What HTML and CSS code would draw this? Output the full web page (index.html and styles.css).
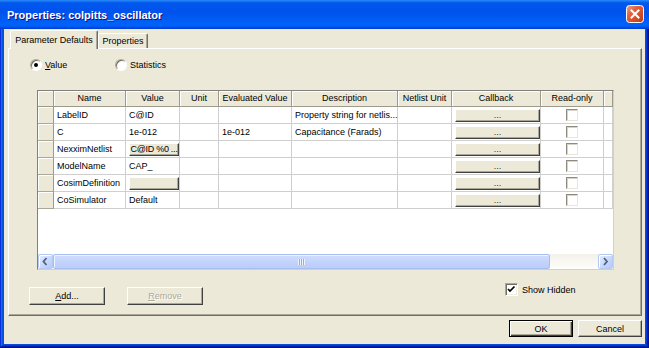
FILE: index.html
```html
<!DOCTYPE html>
<html>
<head>
<meta charset="utf-8">
<title>Properties: colpitts_oscillator</title>
<link rel="stylesheet" href="styles.css">
</head>
<body>
<div class="window">
  <div class="titlebar">
    <span class="title">Properties: colpitts_oscillator</span>
    <span class="close">
      <svg width="18" height="18" viewBox="0 0 18 18">
        <defs>
          <linearGradient id="cg" x1="0" y1="0" x2="1" y2="1">
            <stop offset="0" stop-color="#F2A68F"/>
            <stop offset=".35" stop-color="#E2623F"/>
            <stop offset="1" stop-color="#C2360F"/>
          </linearGradient>
        </defs>
        <rect x=".5" y=".5" width="17" height="17" rx="3" fill="url(#cg)" stroke="#fff"/>
        <path d="M5.5 5.5 L12.5 12.5 M12.5 5.5 L5.5 12.5" stroke="#fff" stroke-width="2" stroke-linecap="square"/>
      </svg>
    </span>
  </div>
  <div class="frame">
    <div class="tabs">
      <div class="tab active">Parameter Defaults</div>
      <div class="tab inactive">Properties</div>
    </div>
    <div class="panel">
      <div class="radios">
        <div class="radio first"><span class="rb checked"></span><span><u>V</u>alue</span></div>
        <div class="radio"><span class="rb"></span><span>Statistics</span></div>
      </div>
      <div class="grid">
        <div class="table">
          <div class="th"></div><div class="th">Name</div><div class="th">Value</div><div class="th">Unit</div><div class="th">Evaluated Value</div><div class="th">Description</div><div class="th">Netlist Unit</div><div class="th">Callback</div><div class="th">Read-only</div><div class="th"></div>

          <div class="rh"></div><div class="td">LabelID</div><div class="td">C@ID</div><div class="td"></div><div class="td"></div><div class="td">Property string for netlis...</div><div class="td"></div><div class="td btncell"><span class="cbtn">...</span></div><div class="td chk"><span class="cb"></span></div><div class="td"></div>

          <div class="rh"></div><div class="td">C</div><div class="td">1e-012</div><div class="td"></div><div class="td">1e-012</div><div class="td">Capacitance (Farads)</div><div class="td"></div><div class="td btncell"><span class="cbtn">...</span></div><div class="td chk"><span class="cb"></span></div><div class="td"></div>

          <div class="rh"></div><div class="td">NexximNetlist</div><div class="td btncell"><span class="cbtn val">C@ID %0 ...</span></div><div class="td"></div><div class="td"></div><div class="td"></div><div class="td"></div><div class="td btncell"><span class="cbtn">...</span></div><div class="td chk"><span class="cb"></span></div><div class="td"></div>

          <div class="rh"></div><div class="td">ModelName</div><div class="td">CAP_</div><div class="td"></div><div class="td"></div><div class="td"></div><div class="td"></div><div class="td btncell"><span class="cbtn">...</span></div><div class="td chk"><span class="cb"></span></div><div class="td"></div>

          <div class="rh"></div><div class="td">CosimDefinition</div><div class="td btncell"><span class="cbtn val"></span></div><div class="td"></div><div class="td"></div><div class="td"></div><div class="td"></div><div class="td btncell"><span class="cbtn">...</span></div><div class="td chk"><span class="cb"></span></div><div class="td"></div>

          <div class="rh"></div><div class="td">CoSimulator</div><div class="td">Default</div><div class="td"></div><div class="td"></div><div class="td"></div><div class="td"></div><div class="td btncell"><span class="cbtn">...</span></div><div class="td chk"><span class="cb"></span></div><div class="td"></div>
        </div>
        <div class="filler"></div>
        <div class="hscroll">
          <span class="sarrow">
            <svg width="13" height="13" viewBox="0 0 13 13"><path d="M7.5 3 L4.5 6.5 L7.5 10" fill="none" stroke="#4D6185" stroke-width="1.8"/></svg>
          </span>
          <span class="thumb"><span class="grip"></span></span>
          <span class="track"></span>
          <span class="sarrow">
            <svg width="13" height="13" viewBox="0 0 13 13"><path d="M5 3 L8 6.5 L5 10" fill="none" stroke="#4D6185" stroke-width="1.8"/></svg>
          </span>
        </div>
      </div>
      <div class="actions">
        <button class="btn"><u>A</u>dd...</button>
        <button class="btn disabled"><u>R</u>emove</button>
        <div class="showhidden">
          <span class="cb big">
            <svg width="11" height="11" viewBox="0 0 11 11"><path d="M2 5 L4 7 L8.5 2.5" fill="none" stroke="#000" stroke-width="1.7"/></svg>
          </span>
          <span>Show Hidden</span>
        </div>
      </div>
    </div>
    <div class="footer">
      <button class="btn dlg default">OK</button>
      <button class="btn dlg">Cancel</button>
    </div>
  </div>
</div>
</body>
</html>
```

FILE: styles.css
```css
* { box-sizing: border-box; }
html, body { margin: 0; padding: 0; }
body {
  width: 649px;
  height: 348px;
  overflow: hidden;
  font-family: "Liberation Sans", Arial, sans-serif;
  font-size: 9px;
  color: #000;
  background: #ECE9D8;
}

.window {
  width: 649px;
  height: 348px;
  display: flex;
  flex-direction: column;
  background: #0A4BDE;
  box-shadow: inset -1px -1px #00138c, inset 1px 1px #0831d9, inset -2px -2px #001ea0, inset 2px 2px #166aee, inset -3px -3px #003bda, inset 3px 3px #0855dd;
}

.titlebar {
  flex: none;
  height: 29px;
  display: flex;
  align-items: center;
  justify-content: space-between;
  padding: 0 5px 0 7px;
  background: linear-gradient(180deg, #2C8BFA 0, #0058EE 10%, #0052EC 40%, #0062FA 85%, #005AF0 92%, #0046D8 96%, #003DD7 100%);
}
.title {
  color: #fff;
  font-weight: bold;
  font-size: 11px;
  text-shadow: 1px 1px #0F1089;
  padding-top: 1px;
}
.close { display: block; width: 18px; height: 18px; margin-top: -2px; }
.close svg { display: block; }

.frame {
  flex: 1;
  margin: 0 4px 4px 4px;
  background: #ECE9D8;
  display: flex;
  flex-direction: column;
}

.tabs {
  display: flex;
  align-items: flex-end;
  height: 19px;
  margin: 1px 0 0 6px;
  position: relative;
  z-index: 1;
}
.tab {
  background: #ECE9D8;
  border: 1px solid;
  border-bottom: 0;
  border-color: #fff #716F64 transparent #fff;
  box-shadow: inset -1px 0 #ACA899;
  border-radius: 2px 2px 0 0;
  display: flex;
  align-items: center;
  justify-content: center;
  white-space: nowrap;
}
.tab.active { width: 88px; height: 19px; padding-bottom: 1px; }
.tab.inactive { width: 50px; height: 15px; margin-bottom: 1px; }

.panel {
  margin: -1px 3px 0 4px;
  height: 268px;
  border: 1px solid;
  border-color: #fff #716F64 #716F64 #fff;
  box-shadow: inset -1px -1px #ACA899;
  display: flex;
  flex-direction: column;
}

.radios {
  display: flex;
  align-items: center;
  height: 13px;
  margin: 9px 0 0 21px;
}
.radio { display: flex; align-items: center; gap: 3px; }
.radio.first { width: 85px; }
.rb {
  width: 12px;
  height: 12px;
  border-radius: 50%;
  border: 1px solid;
  border-color: #ACA899 #fff #fff #ACA899;
  background: #fff;
  box-shadow: inset 1px 1px #716F64;
  display: flex;
  align-items: center;
  justify-content: center;
}
.rb.checked::after {
  content: "";
  width: 4px;
  height: 4px;
  border-radius: 50%;
  background: #000;
}

.grid {
  margin: 19px 0 0 28px;
  width: 577px;
  height: 180px;
  border: 1px solid;
  border-color: #808080 #D4D0C8 #D4D0C8 #808080;
  background: #fff;
  display: flex;
  flex-direction: column;
}
.table {
  display: grid;
  grid-template-columns: 16px 72px 54px 39px 73px 106px 54px 89px 63px 9px;
  grid-template-rows: 16px;
  grid-auto-rows: 17px;
}
.th {
  background: #ECE9D8;
  border-right: 1px solid #9D9A8C;
  border-bottom: 1px solid #9D9A8C;
  box-shadow: inset 1px 1px #fff;
  text-align: center;
  line-height: 15px;
  white-space: nowrap;
  overflow: hidden;
}
.rh {
  background: #ECE9D8;
  border-right: 1px solid #9D9A8C;
  border-bottom: 1px solid #ACA899;
  box-shadow: inset 1px 1px #fff;
}
.td {
  background: #fff;
  border-right: 1px solid #CFCFCF;
  border-bottom: 1px solid #CFCFCF;
  padding-left: 3px;
  line-height: 16px;
  white-space: nowrap;
  overflow: hidden;
}
.td.btncell { display: flex; padding: 2px 0 1px 3px; }
.cbtn {
  flex: 1;
  background: #ECE9D8;
  border: 1px solid;
  border-color: #fff #404040 #404040 #fff;
  box-shadow: inset -1px -1px #ACA899;
  text-align: center;
  line-height: 11px;
  color: #333;
  font-size: 9px;
  white-space: nowrap;
  overflow: hidden;
}
.cbtn.val { color: #000; letter-spacing: -0.3px; text-overflow: clip; }
.td.chk { display: flex; justify-content: center; padding: 2px 0 0 0; }
.cb {
  width: 12px;
  height: 12px;
  background: #fff;
  border: 1px solid;
  border-color: #8E8B7E #E8E6DC #E8E6DC #8E8B7E;
  box-shadow: inset 1px 1px #D8D5C8;
}
.cb.big {
  width: 13px;
  height: 13px;
  border-color: #ACA899 #fff #fff #ACA899;
  box-shadow: inset 1px 1px #716F64, inset -1px -1px #F1EFE2;
  display: flex;
  align-items: center;
  justify-content: center;
}
.cb.big svg { display: block; }

.filler { flex: 1; background: #fff; }
.hscroll {
  height: 15px;
  display: flex;
  background: linear-gradient(180deg, #F3F1EA, #FEFEFB);
}
.sarrow {
  width: 15px;
  height: 15px;
  border: 1px solid #B4C8F6;
  border-radius: 2px;
  background: linear-gradient(135deg, #E6EEFE 0%, #C6D6FB 60%, #B6CAF7 100%);
  box-shadow: inset 1px 1px #fff;
  display: flex;
  align-items: center;
  justify-content: center;
}
.sarrow svg { display: block; }
.thumb {
  width: 497px;
  height: 15px;
  border: 1px solid #A7BEF2;
  border-radius: 2px;
  background: linear-gradient(180deg, #D0DDFD 0%, #C3D4FC 50%, #BACDF9 100%);
  box-shadow: inset 1px 1px #EEF3FE;
  display: flex;
  align-items: center;
  justify-content: center;
}
.grip {
  width: 7px;
  height: 6px;
  background: repeating-linear-gradient(90deg, #EEF4FE 0 1px, #8CAEF0 1px 2px);
}
.track { flex: 1; }

.actions {
  display: flex;
  align-items: flex-start;
  margin: 17px 0 0 20px;
}
.btn {
  width: 76px;
  height: 18px;
  padding: 0;
  margin: 0;
  background: #ECE9D8;
  border: 1px solid;
  border-color: #fff #404040 #404040 #fff;
  box-shadow: inset -1px -1px #ACA899;
  font-family: "Liberation Sans", Arial, sans-serif;
  font-size: 9px;
  color: #000;
  text-align: center;
}
.btn.disabled {
  margin-left: 22px;
  color: #ACA899;
  text-shadow: 1px 1px #fff;
}
.showhidden {
  display: flex;
  align-items: center;
  gap: 4px;
  margin: -4px 0 0 302px;
}

.footer {
  display: flex;
  justify-content: flex-end;
  gap: 5px;
  margin: 4px 3px 0 0;
}
.btn.dlg { width: 64px; height: 17px; }
.btn.default {
  border: 1px solid #000;
  box-shadow: inset 1px 1px #fff, inset -1px -1px #404040, inset -2px -2px #ACA899;
}
```
